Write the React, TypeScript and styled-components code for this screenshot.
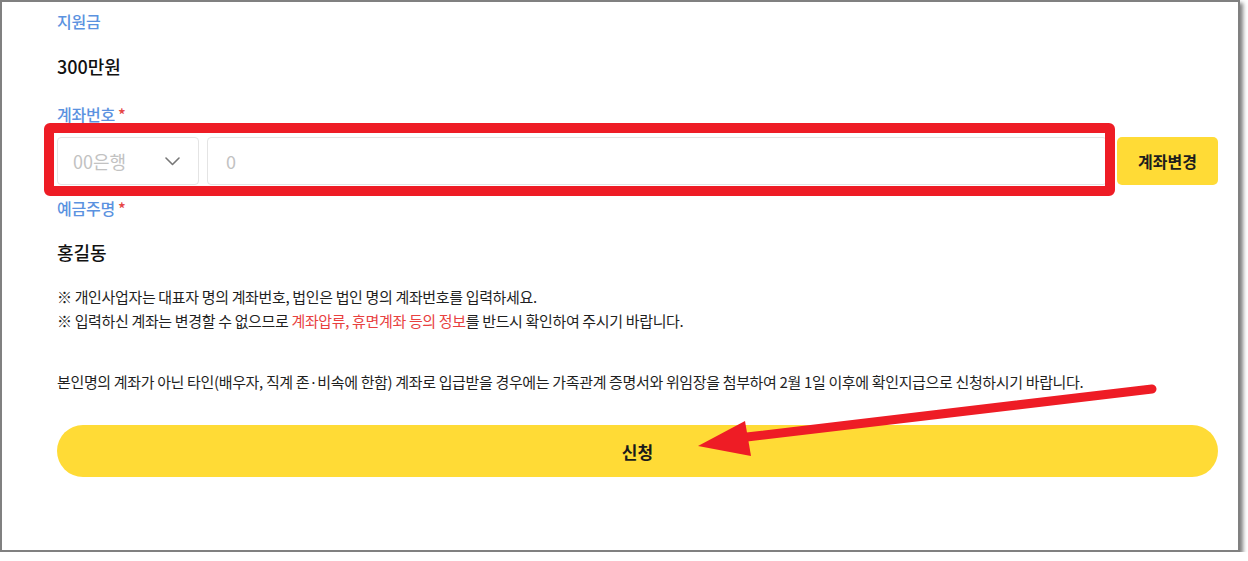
import React from "react";
import styled, { createGlobalStyle } from "styled-components";

const Global = createGlobalStyle`
  html, body { margin: 0; padding: 0; background: #ffffff; }
  body { font-family: "Noto Sans CJK KR", "Noto Sans", sans-serif; }
  * { box-sizing: border-box; }
`;

const Frame = styled.div`
  position: relative;
  width: 1240px;
  height: 552px;
  border: 2px solid #808080;
  box-shadow: 3px 3px 4px rgba(0, 0, 0, 0.5);
  background: #fff;
  padding: 9px 20px 0 55px;
  font-family: "Noto Sans CJK KR", "Noto Sans", sans-serif;
`;

const Form = styled.div`
  width: 1161px;
  display: flex;
  flex-direction: column;
`;

const Label = styled.div<{ $mt?: number }>`
  margin-top: ${(p) => p.$mt ?? 0}px;
  height: 20px;
  line-height: 20px;
  font-size: 16px;
  font-weight: 500;
  color: #5b92e0;
  letter-spacing: -0.2px;
`;

const Req = styled.span`
  color: #e64545;
  margin-left: 3px;
`;

const Value = styled.div<{ $mt: number }>`
  margin-top: ${(p) => p.$mt}px;
  height: 26px;
  line-height: 26px;
  font-size: 18px;
  font-weight: 500;
  color: #111;
`;

const Row = styled.div`
  margin-top: 13px;
  display: flex;
  height: 48px;
  gap: 8px;
`;

const Select = styled.div`
  width: 142px;
  height: 100%;
  border: 1px solid #e4e4e4;
  border-radius: 4px;
  display: flex;
  align-items: center;
  justify-content: space-between;
  padding: 0 18px 0 15px;
  font-size: 18px;
  color: #c2c2c2;
`;

const Input = styled.div`
  flex: 1;
  height: 100%;
  border: 1px solid #e4e4e4;
  border-radius: 4px;
  display: flex;
  align-items: center;
  padding-left: 18px;
  font-size: 18px;
  color: #c2c2c2;
`;

const SmallButton = styled.div`
  width: 101px;
  height: 100%;
  margin-left: 2px;
  border-radius: 5px;
  background: #ffdb36;
  display: flex;
  align-items: center;
  justify-content: center;
  font-size: 16px;
  font-weight: 600;
  color: #1d1d1d;
`;

const Notes = styled.div<{ $mt: number }>`
  margin-top: ${(p) => p.$mt}px;
  font-size: 15px;
  line-height: 24px;
  color: #1f1f1f;
  letter-spacing: -0.35px;
`;

const Em = styled.span`
  color: #e8413f;
`;

const Submit = styled.div`
  margin-top: 31px;
  height: 52px;
  border-radius: 26px;
  background: #ffdb36;
  display: flex;
  align-items: center;
  justify-content: center;
  font-size: 17px;
  font-weight: 700;
  color: #1a1a1a;
`;

const Highlight = styled.div`
  position: absolute;
  left: 42px;
  top: 121px;
  width: 1071px;
  height: 73px;
  border: 10px solid #ee1c25;
  border-radius: 6px;
  pointer-events: none;
`;

const ArrowLayer = styled.svg`
  position: absolute;
  left: -2px;
  top: -2px;
  pointer-events: none;
`;

const Chevron = () => (
  <svg width="15" height="9" viewBox="0 0 15 9" fill="none">
    <path d="M1 1l6.5 6.5L14 1" stroke="#777" strokeWidth="1.6" strokeLinecap="round" strokeLinejoin="round" />
  </svg>
);

export default function App() {
  return (
    <>
      <Global />
      <Frame>
        <Form>
          <Label>지원금</Label>
          <Value $mt={22}>300만원</Value>
          <Label $mt={25}>
            계좌번호<Req>*</Req>
          </Label>
          <Row>
            <Select>
              <span>00은행</span>
              <Chevron />
            </Select>
            <Input>0</Input>
            <SmallButton>계좌변경</SmallButton>
          </Row>
          <Label $mt={13}>
            예금주명<Req>*</Req>
          </Label>
          <Value $mt={21}>홍길동</Value>
          <Notes $mt={20}>
            ※ 개인사업자는 대표자 명의 계좌번호, 법인은 법인 명의 계좌번호를 입력하세요.
            <br />
            ※ 입력하신 계좌는 변경할 수 없으므로 <Em>계좌압류, 휴면계좌 등의 정보</Em>를 반드시 확인하여 주시기 바랍니다.
          </Notes>
          <Notes $mt={37}>
            본인명의 계좌가 아닌 타인(배우자, 직계 존·비속에 한함) 계좌로 입급받을 경우에는 가족관계 증명서와 위임장을 첨부하여 2월 1일 이후에 확인지급으로 신청하시기 바랍니다.
          </Notes>
          <Submit>신청</Submit>
        </Form>
        <Highlight />
        <ArrowLayer width="1248" height="561" viewBox="0 0 1248 561">
          <line x1="1152" y1="389" x2="738" y2="438" stroke="#ee1c25" strokeWidth="9" strokeLinecap="round" />
          <polygon points="698,446 745,421 751,456" fill="#ee1c25" />
        </ArrowLayer>
      </Frame>
    </>
  );
}
